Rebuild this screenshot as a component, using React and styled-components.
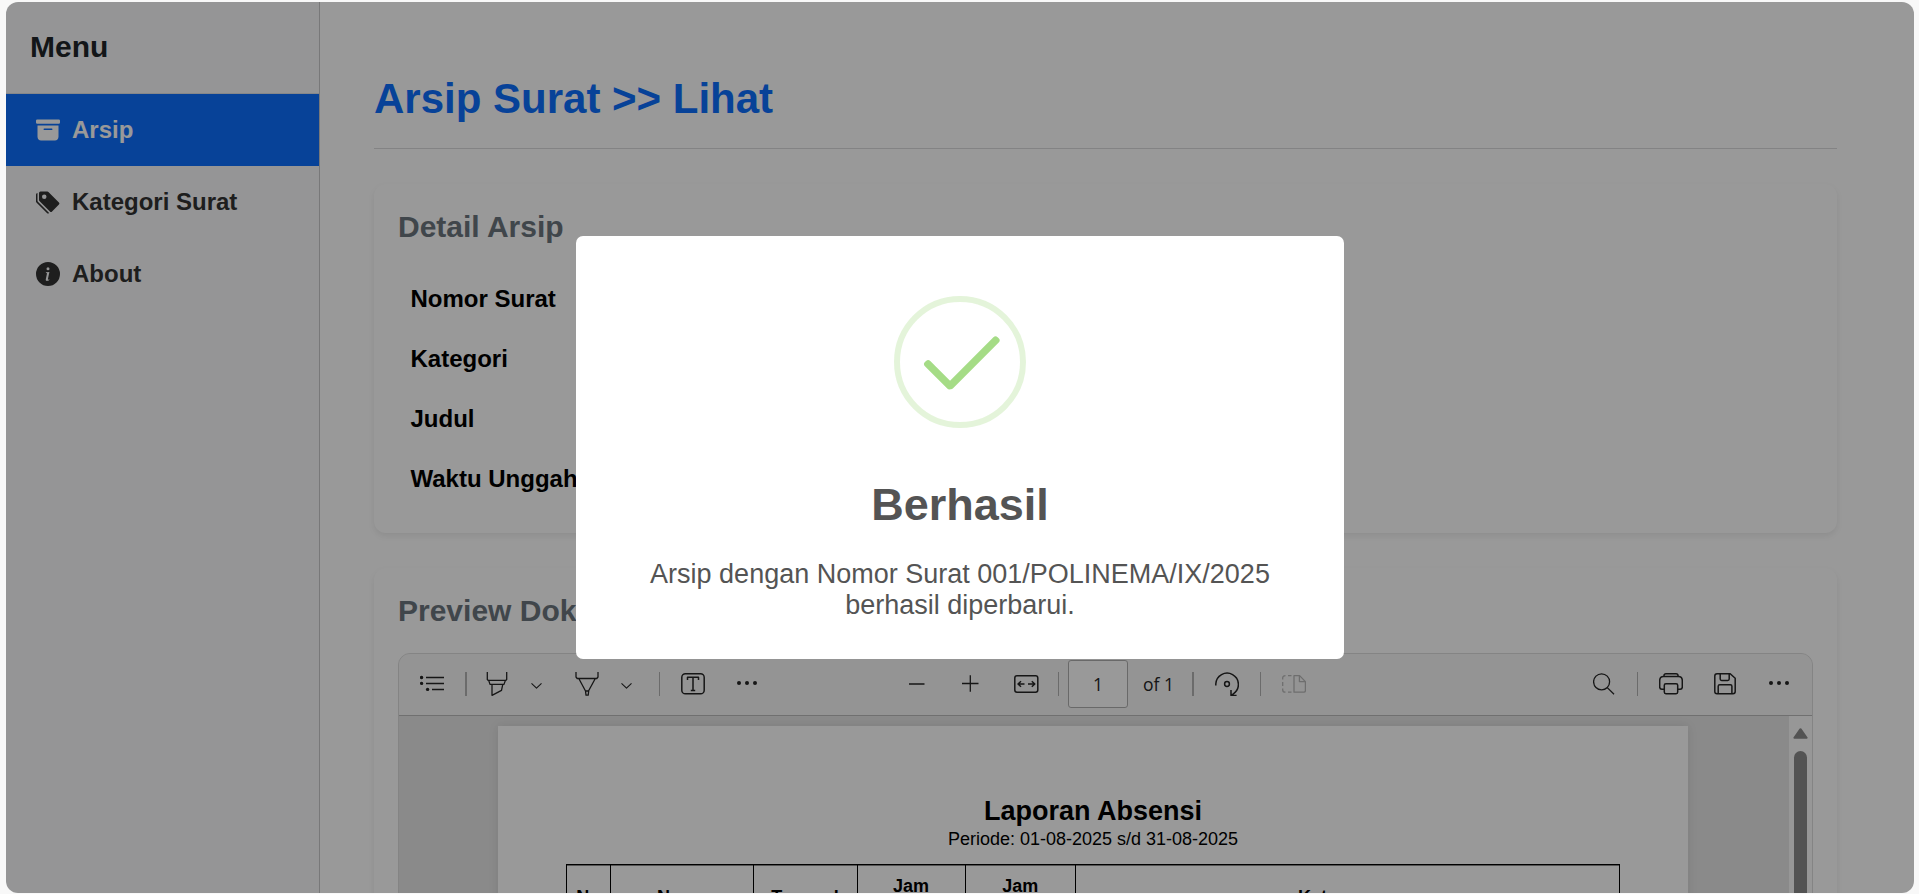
import React from "react";
import styled, { createGlobalStyle } from "styled-components";
import { BsArchiveFill, BsTagsFill, BsInfoCircleFill } from "react-icons/bs";

const GlobalStyle = createGlobalStyle`
  *, *::before, *::after { box-sizing: border-box; }
  html, body { margin: 0; height: 100%; overflow: hidden; background: #f8f8f8; }
  body { font-family: "Liberation Sans", Arial, sans-serif; color: #212529; }
  h1, h2, h3, p { margin: 0; }
  svg { display: block; flex: none; }
`;

const Window = styled.div`
  position: relative;
  display: flex;
  width: 1908px;
  height: 891px;
  margin: 2px 0 0 6px;
  border-radius: 12px;
  overflow: hidden;
  background: #fff;
`;

const Sidebar = styled.nav`
  flex: none;
  width: 314px;
  background: #f8f9fa;
  border-right: 1px solid #c8c9ca;
`;

const SidebarTitle = styled.h3`
  height: 92px;
  padding: 27px 24px 0;
  border-bottom: 1px solid #dee2e6;
  font-size: 30px;
  line-height: 36px;
`;

const MenuItem = styled.div`
  display: flex;
  align-items: center;
  gap: 12px;
  height: 72px;
  padding-left: 30px;
  font-size: 24px;
  font-weight: 700;
  color: ${(p) => (p.$active ? "#fff" : "#333")};
  background: ${(p) => (p.$active ? "#0d6efd" : "transparent")};
`;

const Main = styled.main`
  flex: 1;
  min-width: 0;
  padding: 72px 77px 0 54px;
`;

const PageTitle = styled.h1`
  padding-bottom: 24px;
  border-bottom: 1px solid #dadbdc;
  font-size: 42px;
  line-height: 50px;
  color: #0d6efd;
`;

const Card = styled.section`
  margin-top: 35px;
  padding: 25px 24px;
  border-radius: 12px;
  background: #fff;
  box-shadow: 0 3px 6px rgba(0, 0, 0, 0.075);
`;

const CardTitle = styled.h2`
  margin-bottom: ${(p) => p.$gap}px;
  font-size: 30px;
  line-height: 36px;
  color: #6c757d;
`;

const DetailList = styled.div`
  height: 240px;
  padding: 1px 12px 0 12.5px;
`;

const DetailRow = styled.div`
  font-size: 24px;
  font-weight: 700;
  line-height: 60px;
  color: #000;
`;

const Viewer = styled.div`
  height: 700px;
  border: 1px solid #dcdcdc;
  border-radius: 12px;
  overflow: hidden;
  background: #e6e6e6;
`;

const Toolbar = styled.div`
  display: flex;
  align-items: center;
  height: 62px;
  padding-bottom: 1px;
  border-bottom: 1px solid #bbb;
  background: #f7f7f7;
  color: #252525;
  font: 17.5px/24px "Open Sans", "Noto Sans", sans-serif;
`;

const Tool = styled.span`
  display: block;
  flex: none;
  width: ${(p) => p.$w}px;
  height: 24px;
  margin-left: ${(p) => p.$gap}px;
  color: ${(p) => (p.$muted ? "#b8b8b8" : "inherit")};
`;

const Separator = styled.span`
  flex: none;
  width: ${(p) => p.$w || 1}px;
  height: 24px;
  margin-left: ${(p) => p.$gap}px;
  background: #b2b2b2;
`;

const PageInput = styled.span`
  flex: none;
  width: 60px;
  height: 48px;
  margin-left: 9px;
  border: 1px solid #b0b0b0;
  border-radius: 3px;
  background: #fff;
  text-align: center;
  line-height: 46px;
`;

const PageCount = styled.span`
  flex: none;
  width: 31px;
  margin-left: 15px;
  white-space: nowrap;
`;

const ViewerBody = styled.div`
  display: flex;
  height: 640px;
`;

const Canvas = styled.div`
  flex: 1;
  padding: 10px 101px 0 99px;
`;

const Paper = styled.article`
  height: 640px;
  padding: 68px 68px 0;
  background: #fff;
  box-shadow: 0 0 10px rgba(0, 0, 0, 0.09);
  color: #000;
  text-align: center;
`;

const ReportTitle = styled.h2`
  font-size: 27px;
  line-height: 34px;
`;

const ReportPeriod = styled.p`
  font-size: 18px;
  line-height: 22px;
`;

const ReportTable = styled.div`
  display: grid;
  grid-template-columns: 43.5px 143px 104px 108px 110.5px 544px;
  width: 1054px;
  height: 300px;
  margin-top: 14px;
  border: 1px solid #000;
  border-width: 1px 0 0 1px;
  box-shadow: inset 0 1px 0 rgba(0, 0, 0, 0.45);
`;

const HeadCell = styled.div`
  display: flex;
  justify-content: center;
  align-items: center;
  height: 64px;
  border-right: 1px solid #000;
  font-size: 18px;
  font-weight: 700;
  line-height: 22px;
`;

const Scrollbar = styled.div`
  display: flex;
  flex-direction: column;
  align-items: center;
  width: 23px;
  padding-top: 12px;
  background: #fcfcfc;
`;

const Thumb = styled.div`
  width: 13px;
  height: 500px;
  margin-top: 12px;
  border-radius: 7px;
  background: #8a8a8a;
`;

const Overlay = styled.div`
  position: absolute;
  inset: 0;
  display: flex;
  align-items: center;
  justify-content: center;
  background: rgba(0, 0, 0, 0.4);
`;

const Dialog = styled.div`
  display: flex;
  flex-direction: column;
  align-items: center;
  width: 768px;
  height: 423px;
  padding-top: 60px;
  border-radius: 7px;
  background: #fff;
  color: #545454;
  text-align: center;
`;

const DialogTitle = styled.h2`
  margin-top: 51px;
  font-size: 45px;
  line-height: 52px;
`;

const DialogText = styled.p`
  width: 690px;
  margin-top: 28px;
  font-size: 27px;
  line-height: 31px;
`;

/* Line icon whose drawing area is 24px tall and centred in the toolbar. */
function Glyph({ w, gap, muted, sw = 1.3, children }) {
  return (
    <Tool $w={w} $gap={gap} $muted={muted}>
      <svg width={w} height="24" viewBox={`0 0 ${w} 24`} fill="none" stroke="currentColor" strokeWidth={sw} strokeLinejoin="round">
        {children}
      </svg>
    </Tool>
  );
}

function Dots({ gap }) {
  return (
    <Glyph w={20} gap={gap}>
      <g fill="currentColor" stroke="none">
        <circle cx="2" cy="11" r="2" />
        <circle cx="10" cy="11" r="2" />
        <circle cx="18" cy="11" r="2" />
      </g>
    </Glyph>
  );
}

function Chevron({ gap }) {
  return (
    <Glyph w={11} gap={gap} sw={1.1}>
      <path d="M0.5 11.3 5.5 16.2 10.5 11.3" />
    </Glyph>
  );
}

function PdfToolbar() {
  return (
    <Toolbar>
      <Glyph w={24} gap={21}>
        <g fill="currentColor" stroke="none">
          <circle cx="1.6" cy="5.5" r="1.7" />
          <circle cx="1.6" cy="11.4" r="1.7" />
          <circle cx="7.6" cy="17.4" r="1.7" />
        </g>
        <path d="M6 5.5h18M6 11.5h18M12 17.5h12" />
      </Glyph>
      <Separator $w={2} $gap={21} />
      <Glyph w={22} gap={19}>
        <path d="M1.3 0v7.5l1 .9h17.4l1-.9V0M2.7 8.4l1.3 4h14l1.4-4M6 12.4v10.9l9.5-5 1.3-5.9" />
      </Glyph>
      <Chevron gap={22.5} />
      <Glyph w={24} gap={33.5}>
        <path d="M1 0v5l1.2 1.5h19.6L23 5V0M3.8 6.5l6.7 12.5h3L20.3 6.5M10.5 19l.5 4.2h2.2l.5-4.2" />
      </Glyph>
      <Chevron gap={21.5} />
      <Separator $gap={27.5} />
      <Glyph w={24} gap={21} sw={1.5}>
        <rect x="0.8" y="1.8" width="22.4" height="20" rx="3.6" />
        <path d="M6.5 8V5.3h11V8M12 5.3v13.2M9.8 18.6h4.4" />
      </Glyph>
      <Dots gap={32} />

      <Glyph w={16} gap={152}>
        <path d="M0 12h15.5" />
      </Glyph>
      <Glyph w={17} gap={37}>
        <path d="M0 11.5h16.5M8.3 3.3v16.4" />
      </Glyph>
      <Glyph w={25} gap={34.5} sw={1.5}>
        <rect x="0.8" y="3.8" width="23" height="16.4" rx="2.2" />
        <path d="M4 12h6.5M7 9.2 4 12l3 2.8M14 12h6.8M17.8 9.2l3 2.8-3 2.8" />
      </Glyph>
      <Separator $gap={19.5} />
      <PageInput>1</PageInput>
      <PageCount>of 1</PageCount>
      <Separator $w={2} $gap={18} />
      <Glyph w={24} gap={21} sw={1.5}>
        <path d="M.8 13.5V12a11.3 11.3 0 1 1 17.6 9.8l-2.2 1.4M16 18v5.4h5.6" />
        <circle cx="12" cy="12" r="2.4" />
      </Glyph>
      <Separator $gap={21} />
      <Glyph w={24} gap={21} muted>
        <path d="M12 3.6h5.6l5.8 6v9q0 1.6-1.6 1.6H12zM17.4 3.8v5.8h5.8" />
        <path d="M9.5 3.6H6M3.5 3.6Q.7 3.6.7 6v1.5M.7 10v4M.7 16.5v1.4q0 2.3 2.8 2.3M6 20.2h3.5" />
      </Glyph>

      <Glyph w={22} gap={287}>
        <circle cx="8.6" cy="9.8" r="8" />
        <path d="M14.3 15.6 21 22.3" />
      </Glyph>
      <Separator $gap={22} />
      <Glyph w={24} gap={21} sw={1.5}>
        <path d="M5 17.2H2.8Q.7 17.2.7 15V8.6Q.7 4.5 4.5 4.5h15q3.8 0 3.8 4.1V15q0 2.2-2.1 2.2H19" />
        <path d="M5 4.5V3.6Q5 1.7 7 1.7h10q2 0 2 1.9v.9" />
        <rect x="5.3" y="11.7" width="13.4" height="10" rx="1.6" />
      </Glyph>
      <Glyph w={22} gap={31} sw={1.5}>
        <path d="M3 1.7h13.2l5 4.6V19.5q0 2.2-2.2 2.2H3Q.8 21.7.8 19.5V4Q.8 1.7 3 1.7z" />
        <path d="M6.2 1.7V7q0 1.4 1.4 1.4h6.2q1.4 0 1.4-1.4V1.7M4.2 21.7v-7.5q0-1.5 1.5-1.5h10.7q1.5 0 1.5 1.5v7.5" />
      </Glyph>
      <Dots gap={33} />
    </Toolbar>
  );
}

const details = ["Nomor Surat", "Kategori", "Judul", "Waktu Unggah"];

export default function App() {
  return (
    <>
      <GlobalStyle />
      <Window>
        <Sidebar>
          <SidebarTitle>Menu</SidebarTitle>
          <MenuItem $active>
            <BsArchiveFill size={24} />
            Arsip
          </MenuItem>
          <MenuItem>
            <BsTagsFill size={24} />
            Kategori Surat
          </MenuItem>
          <MenuItem>
            <BsInfoCircleFill size={24} />
            About
          </MenuItem>
        </Sidebar>

        <Main>
          <PageTitle>Arsip Surat &gt;&gt; Lihat</PageTitle>
          <Card>
            <CardTitle $gap={23}>Detail Arsip</CardTitle>
            <DetailList>
              {details.map((label) => (
                <DetailRow key={label}>{label}</DetailRow>
              ))}
            </DetailList>
          </Card>
          <Card>
            <CardTitle $gap={24}>Preview Dokumen</CardTitle>
            <Viewer>
              <PdfToolbar />
              <ViewerBody>
                <Canvas>
                  <Paper>
                    <ReportTitle>Laporan Absensi</ReportTitle>
                    <ReportPeriod>Periode: 01-08-2025 s/d 31-08-2025</ReportPeriod>
                    <ReportTable>
                      <HeadCell>No</HeadCell>
                      <HeadCell>Nama</HeadCell>
                      <HeadCell>Tanggal</HeadCell>
                      <HeadCell>
                        Jam
                        <br />
                        Masuk
                      </HeadCell>
                      <HeadCell>
                        Jam
                        <br />
                        Pulang
                      </HeadCell>
                      <HeadCell>Keterangan</HeadCell>
                    </ReportTable>
                  </Paper>
                </Canvas>
                <Scrollbar>
                  <svg width="15" height="11" viewBox="0 0 15 11">
                    <path d="M7.5 1.2 13.6 9.8H1.4z" fill="#8a8a8a" stroke="#8a8a8a" strokeWidth="2" strokeLinejoin="round" />
                  </svg>
                  <Thumb />
                </Scrollbar>
              </ViewerBody>
            </Viewer>
          </Card>
        </Main>

        <Overlay>
          <Dialog>
            <svg width="132" height="132" viewBox="0 0 132 132">
              <circle cx="66" cy="66" r="63" fill="none" stroke="#a5dc86" strokeOpacity="0.3" strokeWidth="6" />
              <g fill="#a5dc86">
                <rect x="26" y="75" width="37.5" height="7.5" rx="3" transform="rotate(45 44.75 78.75)" />
                <rect x="44" y="63" width="70.5" height="7.5" rx="3" transform="rotate(-45 79.25 66.75)" />
              </g>
            </svg>
            <DialogTitle>Berhasil</DialogTitle>
            <DialogText>Arsip dengan Nomor Surat 001/POLINEMA/IX/2025 berhasil diperbarui.</DialogText>
          </Dialog>
        </Overlay>
      </Window>
    </>
  );
}
